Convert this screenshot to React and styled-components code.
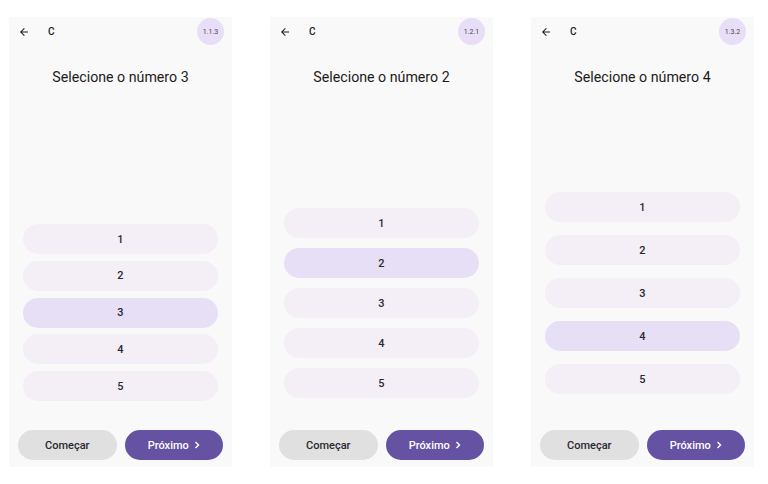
import React from 'react';
import styled, { createGlobalStyle } from 'styled-components';

const GlobalStyle = createGlobalStyle`
  body {
    margin: 0;
    background: #ffffff;
    font-family: Roboto, "Noto Sans", sans-serif;
  }
`;

const Screens = styled.div`
  display: flex;
  gap: 38px;
  padding: 17px 0 0 9px;
`;

const Phone = styled.div`
  width: 223px;
  height: 450px;
  background: #f9f9f9;
  display: flex;
  flex-direction: column;
`;

const TopBar = styled.div`
  height: 29px;
  display: flex;
  align-items: center;
  padding: 0 8px 0 9px;
`;

const BackIcon = styled.svg`
  width: 12px;
  height: 12px;
  fill: #1d1b20;
  flex-shrink: 0;
`;

const BarTitle = styled.span`
  margin-left: 18px;
  font-size: 10px;
  font-weight: 500;
  color: #1d1b20;
  flex: 1;
`;

const Badge = styled.div`
  width: 27px;
  height: 27px;
  border-radius: 50%;
  background: #e8def8;
  display: flex;
  align-items: center;
  justify-content: center;
  font-size: 7px;
  color: #49454f;
`;

const Title = styled.h1`
  margin: 23px 0 0;
  text-align: center;
  font-size: 14.2px;
  line-height: 17px;
  font-weight: 400;
  color: #1d1b20;
`;

const Options = styled.div`
  flex: 1;
  display: flex;
  flex-direction: column;
  justify-content: flex-end;
  gap: ${(p) => p.$gap}px;
  padding: 0 14px ${(p) => p.$bottom}px;
`;

const Option = styled.div`
  height: 30px;
  border-radius: 15px;
  background: ${(p) => (p.$selected ? '#e7dff6' : '#f4eff6')};
  display: flex;
  align-items: center;
  justify-content: center;
  font-size: 11px;
  font-weight: 500;
  color: #2a2830;
`;

const Footer = styled.div`
  display: flex;
  gap: 8px;
  padding: 0 9px 7px;
`;

const Button = styled.button`
  flex: 1;
  height: 30px;
  border: none;
  border-radius: 15px;
  background: ${(p) => (p.$primary ? '#6552a3' : '#e0e0e0')};
  color: ${(p) => (p.$primary ? '#ffffff' : '#2a2830')};
  font-family: Roboto, sans-serif;
  font-size: 11px;
  font-weight: 500;
  display: flex;
  align-items: center;
  justify-content: center;
  gap: 5px;
  padding: 0;
`;

const Chevron = styled.svg`
  width: 6px;
  height: 8px;
`;

const screens = [
  { code: '1.1.3', target: 3, gap: 6.75, bottom: 29 },
  { code: '1.2.1', target: 2, gap: 10, bottom: 32 },
  { code: '1.3.2', target: 4, gap: 13, bottom: 36 },
];

const Screen = ({ code, target, gap, bottom }) => (
  <Phone>
    <TopBar>
      <BackIcon viewBox="0 0 24 24">
        <path d="M20 11H7.83l5.59-5.59L12 4l-8 8 8 8 1.41-1.41L7.83 13H20v-2z" />
      </BackIcon>
      <BarTitle>C</BarTitle>
      <Badge>{code}</Badge>
    </TopBar>
    <Title>Selecione o número {target}</Title>
    <Options $gap={gap} $bottom={bottom}>
      {[1, 2, 3, 4, 5].map((n) => (
        <Option key={n} $selected={n === target}>
          {n}
        </Option>
      ))}
    </Options>
    <Footer>
      <Button>Começar</Button>
      <Button $primary>
        Próximo
        <Chevron viewBox="0 0 6 8">
          <polyline points="1.5,1 4.5,4 1.5,7" fill="none" stroke="#fff" strokeWidth="1.4" />
        </Chevron>
      </Button>
    </Footer>
  </Phone>
);

export default function App() {
  return (
    <>
      <GlobalStyle />
      <Screens>
        {screens.map((s) => (
          <Screen key={s.code} {...s} />
        ))}
      </Screens>
    </>
  );
}
